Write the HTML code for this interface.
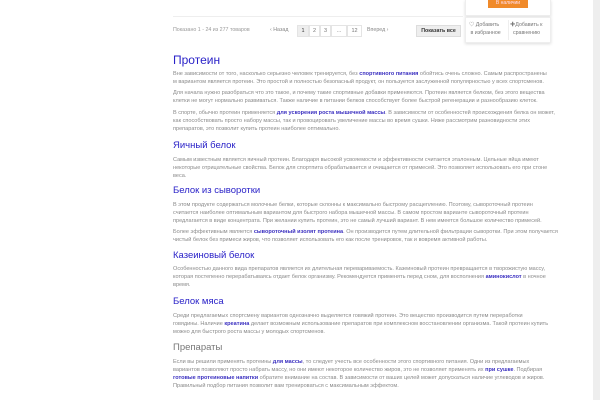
<!DOCTYPE html>
<html><head><meta charset="utf-8"><style>
*{margin:0;padding:0;box-sizing:border-box}
body{width:600px;height:400px;overflow:hidden;background:#fff;font-family:"Liberation Sans","Noto Sans CJK SC",sans-serif;position:relative;color:#888}
.a{position:absolute;white-space:nowrap}
.p{position:absolute;left:173px;font-size:5.55px;line-height:8px;color:#8a8a8a;width:380px;white-space:nowrap}
.h{position:absolute;left:173px;color:#2a22c8;white-space:nowrap}
b{color:#3a2fc0;font-weight:bold}
.pg{position:absolute;top:25px;height:12px;border:1px solid #e4e4e4;font-size:5.5px;line-height:10px;text-align:center;color:#777}
</style></head><body>
<div class="a" style="left:593px;top:0;width:7px;height:400px;background:#eee"></div>
<div class="a" style="left:465px;top:0;width:86px;height:16px;border:1px solid #eee;border-top:none;box-shadow:0 1px 3px #ddd;background:#fff"></div>
<div class="a" style="left:488px;top:0;width:40px;height:8px;background:#f08a2a;color:#fde;font-size:5px;text-align:center;line-height:7px">В наличии</div>
<div class="a" style="left:173px;top:16px;width:290px;height:1px;background:#eee"></div>
<div class="a" style="left:465px;top:17px;width:86px;height:26px;border:1px solid #eee;box-shadow:0 1px 3px #ddd;background:#fff"></div>
<div class="a" style="left:508px;top:20px;width:1px;height:20px;background:#eee"></div>
<div class="a" style="left:469px;top:21px;font-size:5.3px;line-height:8px;color:#777">♡ Добавить<br>&nbsp;в избранное</div>
<div class="a" style="left:510px;top:21px;font-size:5.3px;line-height:8px;color:#777">✚Добавить к<br>&nbsp;&nbsp;сравнению</div>
<div class="a" style="left:173px;top:27px;font-size:5.3px;color:#999">Показано 1 - 24 из 277 товаров</div>
<div class="a" style="left:270px;top:27px;font-size:5.3px;color:#888">‹ Назад</div>
<div class="pg" style="left:297px;width:12px;background:#eee;color:#333">1</div>
<div class="pg" style="left:309px;width:11px">2</div>
<div class="pg" style="left:320px;width:11px">3</div>
<div class="pg" style="left:331px;width:16px">...</div>
<div class="pg" style="left:347px;width:15px">12</div>
<div class="a" style="left:367px;top:27px;font-size:5.3px;color:#888">Вперед ›</div>
<div class="a" style="left:416px;top:25px;width:45px;height:12px;background:#eee;border:1px solid #ddd;font-size:5.3px;line-height:10px;text-align:center;color:#333;font-weight:bold">Показать все</div>

<div class="h" style="top:53px;font-size:12px">Протеин</div>
<div class="p" style="top:70px">Вне зависимости от того, насколько серьезно человек тренируется, без <b>спортивного питания</b> обойтись очень сложно. Самым распространены<br>м вариантом является протеин. Это простой и полностью безопасный продукт, он пользуется заслуженной популярностью у всех спортсменов.</div>
<div class="p" style="top:89px">Для начала нужно разобраться что это такое, и почему такие спортивные добавки применяются. Протеин является белком, без этого вещества<br>клетки не могут нормально развиваться. Также наличие в питании белков способствует более быстрой регенерации и разнообразию клеток.</div>
<div class="p" style="top:109px">В спорте, обычно протеин применяется <b>для ускорения роста мышечной массы</b>. В зависимости от особенностей происхождения белка он может,<br>как способствовать просто набору массы, так и провоцировать увеличение массы во время сушки. Ниже рассмотрим разновидности этих<br>препаратов, это позволит купить протеин наиболее оптимально.</div>
<div class="h" style="top:140px;font-size:9.5px">Яичный белок</div>
<div class="p" style="top:156px">Самым известным является яичный протеин. Благодаря высокой усвояемости и эффективности считается эталонным. Цельные яйца имеют<br>некоторые отрицательные свойства. Белок для спортпита обрабатывается и очищается от примесей. Это позволяет использовать его при стоне<br>веса.</div>
<div class="h" style="top:185px;font-size:9.5px">Белок из сыворотки</div>
<div class="p" style="top:201px">В этом продукте содержаться молочные белки, которые склонны к максимально быстрому расщеплению. Поэтому, сывороточный протеин<br>считается наиболее оптимальным вариантом для быстрого набора мышечной массы. В самом простом варианте сывороточный протеин<br>предлагается в виде концентрата. При желании купить протеин, это не самый лучший вариант. В нем имеется большое количество примесей.</div>
<div class="p" style="top:228px">Более эффективным является <b>сывороточный изолят протеина</b>. Он производится путем длительной фильтрации сыворотки. При этом получается<br>чистый белок без примеси жиров, что позволяет использовать его как после тренировок, так и вовремя активной работы.</div>
<div class="h" style="top:250px;font-size:9.5px">Казеиновый белок</div>
<div class="p" style="top:265px">Особенностью данного вида препаратов является их длительная перевариваемость. Казеиновый протеин превращается в творожистую массу,<br>которая постепенно перерабатываясь отдает белок организму. Рекомендуется применять перед сном, для восполнения <b>аминокислот</b> в ночное<br>время.</div>
<div class="h" style="top:296px;font-size:9.5px">Белок мяса</div>
<div class="p" style="top:312px">Среди предлагаемых спортсмену вариантов однозначно выделяется говяжий протеин. Это вещество производится путем переработки<br>говядины. Наличие <b>креатина</b> делает возможным использование препаратов при комплексном восстановлении организма. Такой протеин купить<br>можно для быстрого роста массы у молодых спортсменов.</div>
<div class="h" style="top:342px;font-size:9.5px;color:#777">Препараты</div>
<div class="p" style="top:358px">Если вы решили применять протеины <b>для массы</b>, то следует учесть все особенности этого спортивного питания. Одни из предлагаемых<br>вариантов позволяют просто набрать массу, но они имеют некоторое количество жиров, это не позволяет применять их <b>при сушке</b>. Подбирая<br><b>готовые протеиновые напитки</b> обратите внимание на состав. В зависимости от ваших целей может допускаться наличие углеводов и жиров.<br>Правильный подбор питания позволит вам тренироваться с максимальным эффектом.</div>
</body></html>
